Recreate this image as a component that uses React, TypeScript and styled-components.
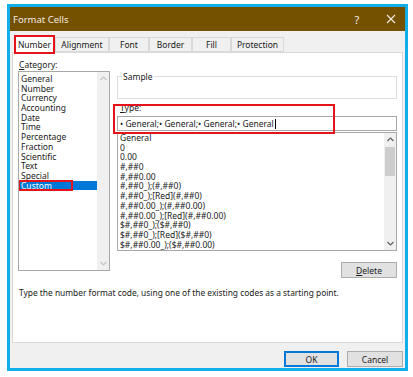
import { styled, createGlobalStyle } from "styled-components";

const GlobalStyle = createGlobalStyle`
    body {
        margin: 0;
        background: #ffffff;
        font-family: "Noto Sans", "Open Sans", sans-serif;
        color: #1a1a1a;
    }
`;

const Page = styled.div`
    padding: 4px 0 0 7px;
`;

const Dialog = styled.div`
    width: 401px;
    height: 367px;
    box-sizing: border-box;
    border: 3px solid #12aeea;
    background: #f0f0f0;
    display: flex;
    flex-direction: column;
`;

const TitleBar = styled.div`
    height: 24px;
    flex: none;
    background: #735100;
    color: #f3ece0;
    display: flex;
    align-items: center;
    padding-left: 3px;
    font-size: 9.5px;
`;

const Title = styled.span`
    flex: 1;
`;

const TitleIcon = styled.span<{ $w: number }>`
    width: ${p => p.$w}px;
    display: flex;
    justify-content: center;
    align-items: center;
    font-size: 11px;
`;

const TabStrip = styled.div`
    height: 21px;
    flex: none;
    display: flex;
    align-items: flex-end;
    padding-left: 4px;
`;

const Tab = styled.div<{ $active?: boolean; $w: number }>`
    position: relative;
    width: ${p => p.$w}px;
    height: ${p => (p.$active ? 18 : 15)}px;
    box-sizing: border-box;
    display: flex;
    align-items: center;
    justify-content: center;
    font-size: 8.5px;
    background: ${p => (p.$active ? "#ffffff" : "#f0f0f0")};
    border: 1px solid #d9d9d9;
    border-bottom: ${p => (p.$active ? "none" : "1px solid #d9d9d9")};
    margin-bottom: ${p => (p.$active ? "-1px" : "0")};
    z-index: ${p => (p.$active ? 2 : 1)};
`;

/* 스크린샷의 빨간 강조 표시 */
const Highlight = styled.span<{ $inset: string }>`
    position: absolute;
    inset: ${p => p.$inset};
    border: 2px solid #e5141b;
    pointer-events: none;
    z-index: 3;
`;

const Panel = styled.div`
    height: 291px;
    flex: none;
    margin: 0 2px;
    box-sizing: border-box;
    background: #ffffff;
    border: 1px solid #d9d9d9;
    padding: 6px 5px 0;
    position: relative;
    z-index: 1;
`;

const Row = styled.div`
    display: grid;
    grid-template-columns: 92px 280px;
    column-gap: 7px;
`;

const Column = styled.div`
    display: flex;
    flex-direction: column;
    position: relative;
`;

const Label = styled.div`
    height: 12px;
    line-height: 12px;
    font-size: 8.5px;
    padding-left: 1px;

    u {
        text-decoration: underline;
    }
`;

const ListBox = styled.div<{ $h: number }>`
    height: ${p => p.$h}px;
    box-sizing: border-box;
    border: 1px solid #a8a8a8;
    background: #ffffff;
    display: flex;
    position: relative;
`;

const ListItems = styled.div<{ $pt: number }>`
    flex: 1;
    padding-top: ${p => p.$pt}px;
    overflow: hidden;
`;

const Item = styled.div<{ $selected?: boolean }>`
    position: relative;
    height: 9.7px;
    line-height: 9.7px;
    font-size: 8.5px;
    padding-left: 2px;
    white-space: nowrap;
    background: ${p => (p.$selected ? "#0078d7" : "transparent")};
    color: ${p => (p.$selected ? "#ffffff" : "#1a1a1a")};
`;

const ScrollBar = styled.div`
    width: 12px;
    flex: none;
    background: #f0f0f0;
    display: flex;
    flex-direction: column;
    align-items: center;
`;

const Arrow = styled.div`
    height: 13px;
    display: flex;
    align-items: center;
    justify-content: center;
`;

const Track = styled.div`
    flex: 1;
    width: 100%;
    display: flex;
    flex-direction: column;
`;

const Thumb = styled.div`
    height: 29px;
    margin: 1px 1px 0;
    background: #cdcdcd;
`;

const SampleBox = styled.div`
    margin-top: 17px;
    height: 23px;
    box-sizing: border-box;
    border: 1px solid #dcdcdc;
    padding-left: 4px;
`;

const SampleLabel = styled.div`
    width: fit-content;
    margin-top: -5px;
    padding: 0 1px;
    background: #ffffff;
    font-size: 8.5px;
    line-height: 10px;
`;

const TypeLabel = styled(Label)`
    margin-top: 3px;
    padding-left: 3px;
`;

const TypeInput = styled.div`
    margin-top: 2px;
    height: 15px;
    box-sizing: border-box;
    border: 1px solid #a8a8a8;
    display: flex;
    align-items: center;
    padding-left: 2px;
    font-size: 8.5px;
    white-space: nowrap;
`;

const Caret = styled.span`
    display: inline-block;
    width: 1px;
    height: 10px;
    background: #000000;
    margin-left: 1px;
`;

const Button = styled.div<{ $default?: boolean }>`
    width: ${p => (p.$default ? 55 : 56)}px;
    height: 16px;
    box-sizing: border-box;
    background: #e1e1e1;
    border: ${p => (p.$default ? "2px solid #0078d7" : "1px solid #adadad")};
    display: flex;
    align-items: center;
    justify-content: center;
    font-size: 8.5px;
    color: #1a1a1a;
`;

const DeleteButton = styled(Button)`
    align-self: flex-end;
    margin-top: 11px;
`;

const Description = styled.p`
    margin: 9px 0 0 1px;
    font-size: 8.4px;
    line-height: 12px;
`;

const Footer = styled.div`
    flex: 1;
    display: flex;
    justify-content: flex-end;
    gap: 8px;
    padding: 8px 2px 0;
`;

const Chevron = ({ up, color }: { up?: boolean; color: string }) => (
    <svg width="7" height="5" viewBox="0 0 7 5">
        <path d={up ? "M0.5 4 L3.5 1 L6.5 4" : "M0.5 1 L3.5 4 L6.5 1"} fill="none" stroke={color} strokeWidth="1.2" />
    </svg>
);

const tabs = [
    { name: "Number", w: 41 },
    { name: "Alignment", w: 54 },
    { name: "Font", w: 40 },
    { name: "Border", w: 43 },
    { name: "Fill", w: 39 },
    { name: "Protection", w: 53 },
];

const categories = [
    "General", "Number", "Currency", "Accounting", "Date", "Time",
    "Percentage", "Fraction", "Scientific", "Text", "Special", "Custom",
];

const formats = [
    "General", "0", "0.00", "#,##0", "#,##0.00",
    "#,##0_);(#,##0)", "#,##0_);[Red](#,##0)",
    "#,##0.00_);(#,##0.00)", "#,##0.00_);[Red](#,##0.00)",
    "$#,##0_);($#,##0)", "$#,##0_);[Red]($#,##0)",
    "$#,##0.00_);($#,##0.00)",
];

const App = () => {
    return (
        <Page>
            <GlobalStyle />
            <Dialog>
                {/* 제목 표시줄 */}
                <TitleBar>
                    <Title>Format Cells</Title>
                    <TitleIcon $w={40}>?</TitleIcon>
                    <TitleIcon $w={28}>
                        <svg width="10" height="10" viewBox="0 0 10 10">
                            <path d="M1 1 L9 9 M9 1 L1 9" stroke="#f3ece0" strokeWidth="1.1" />
                        </svg>
                    </TitleIcon>
                </TitleBar>

                {/* 탭 */}
                <TabStrip>
                    {tabs.map(t => (
                        <Tab key={t.name} $w={t.w} $active={t.name === "Number"}>
                            {t.name}
                            {t.name === "Number" && <Highlight $inset="-1px -1px -1px -1px" />}
                        </Tab>
                    ))}
                </TabStrip>

                <Panel>
                    <Row>
                        <Column>
                            <Label><u>C</u>ategory:</Label>
                            <ListBox $h={200}>
                                <ListItems $pt={2}>
                                    {categories.map(c => (
                                        <Item key={c} $selected={c === "Custom"}>
                                            {c}
                                            {c === "Custom" && <Highlight $inset="-1px 24px -1px -1px" />}
                                        </Item>
                                    ))}
                                </ListItems>
                                <ScrollBar>
                                    <Arrow><Chevron up color="#c4c4c4" /></Arrow>
                                    <Track />
                                    <Arrow><Chevron color="#c4c4c4" /></Arrow>
                                </ScrollBar>
                            </ListBox>
                        </Column>

                        <Column>
                            <SampleBox>
                                <SampleLabel>Sample</SampleLabel>
                            </SampleBox>
                            <TypeLabel><u>T</u>ype:</TypeLabel>
                            <TypeInput>
                                • General;• General;• General;• General<Caret />
                            </TypeInput>
                            <Highlight $inset="45px 62px auto -4px" style={{ height: "30px", boxSizing: "border-box" }} />
                            <ListBox $h={119} style={{ marginTop: 1 }}>
                                <ListItems $pt={0}>
                                    {formats.map(f => (
                                        <Item key={f}>{f}</Item>
                                    ))}
                                </ListItems>
                                <ScrollBar>
                                    <Arrow><Chevron up color="#606060" /></Arrow>
                                    <Track><Thumb /></Track>
                                    <Arrow><Chevron color="#606060" /></Arrow>
                                </ScrollBar>
                            </ListBox>
                            <DeleteButton><u>D</u>elete</DeleteButton>
                        </Column>
                    </Row>

                    <Description>
                        Type the number format code, using one of the existing codes as a starting point.
                    </Description>
                </Panel>

                <Footer>
                    <Button $default>OK</Button>
                    <Button>Cancel</Button>
                </Footer>
            </Dialog>
        </Page>
    );
};

export default App;
